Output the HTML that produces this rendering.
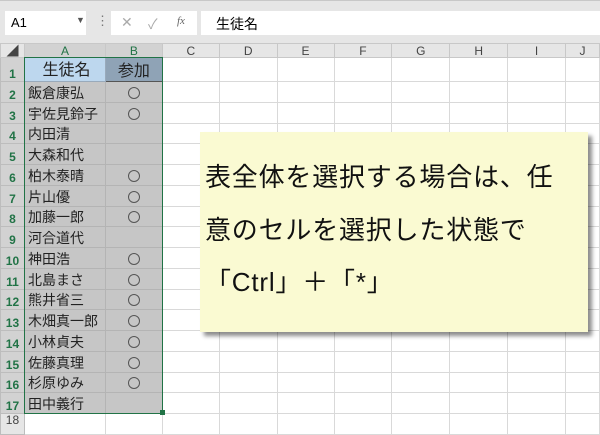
<!DOCTYPE html>
<html><head><meta charset="utf-8"><style>
*{margin:0;padding:0;box-sizing:border-box}
body{width:600px;height:425px;overflow:hidden;background:#fff;font-family:"Liberation Sans","Noto Sans CJK JP",sans-serif;position:relative}
.tb{position:absolute;left:0;top:0;width:600px;height:44px;background:#e6e6e6;border-top:1px solid #c8c8c8}
.box{position:absolute;background:#fff;top:10px;height:24px}
table{position:absolute;left:0;top:43px;border-collapse:collapse;table-layout:fixed}
td{border:1px solid #d9d9d9;font-size:14px;line-height:15px;color:#222;padding:0 0 1px 3px;white-space:nowrap;overflow:hidden;vertical-align:bottom}
tr.h td{background:#e6e6e6;color:#444;font-size:12px;line-height:12px;text-align:center;padding:0;vertical-align:middle;border-color:#c8c8c8;height:14px}
td.rn{background:#d2d2d2;color:#217346;font-size:12px;line-height:13px;text-align:center;padding:0;border-color:#bdbdbd;font-weight:bold}
td.s{background:#c6c6c6;border-color:#b4b4b4}
td.o{background:#c6c6c6;border-color:#b4b4b4;text-align:center;padding:0 0 3px 0;font-size:0;line-height:0}
td.o i{display:inline-block;width:12px;height:12px;border:1px solid #555;border-radius:50%}
.sel{position:absolute;left:24px;top:57px;width:139px;height:357px;border:1.5px solid #217346}
.call{position:absolute;left:200px;top:132px;width:388px;height:200px;background:#fafad2;box-shadow:4px 4px 4px rgba(0,0,0,.45)}
.call div{position:absolute;left:5px;font-size:26px;line-height:30px;letter-spacing:0.8px;color:#111;white-space:nowrap}
</style></head><body>
<div class="tb">
 <div class="box" style="left:5px;width:81px"><span style="position:absolute;left:6px;top:4px;font-size:13px">A1</span><span style="position:absolute;left:71px;top:4px;font-size:9px;color:#555">▼</span></div>
 <span style="position:absolute;left:96px;top:12px;font-size:13px;color:#777">⋮</span>
 <div class="box" style="left:111px;width:86px;color:#aaa;font-size:14px"><span style="position:absolute;left:10px;top:3px">✕</span><span style="position:absolute;left:37px;top:3px">✓</span><span style="position:absolute;left:66px;top:4px;font-size:11px;font-style:italic;color:#666;font-family:'Liberation Serif',serif">fx</span></div>
 <div class="box" style="left:201px;width:399px"><span style="position:absolute;left:15px;top:3px;font-size:14px">生徒名</span></div>
</div>
<table>
<colgroup><col style="width:24px"><col style="width:81px"><col style="width:57px"><col style="width:57px"><col style="width:58px"><col style="width:57px"><col style="width:58px"><col style="width:58px"><col style="width:58px"><col style="width:58px"><col style="width:34px"></colgroup>
<tr class="h"><td>◢</td><td style="background:#d2d2d2;color:#217346">A</td><td style="background:#d2d2d2;color:#217346">B</td><td>C</td><td>D</td><td>E</td><td>F</td><td>G</td><td>H</td><td>I</td><td>J</td></tr>
<tr style="height:24px"><td class="rn">1</td><td style="background:#bdd7ee;text-align:center;font-size:16px;line-height:18px;border-color:#9ab">生徒名</td><td style="background:#8fa3b6;text-align:center;font-size:16px;line-height:18px;border:1px solid #555;padding:0">参加</td><td></td><td></td><td></td><td></td><td></td><td></td><td></td><td></td></tr>
<tr style="height:21px"><td class="rn">2</td><td class="s">飯倉康弘</td><td class="o"><i></i></td><td></td><td></td><td></td><td></td><td></td><td></td><td></td><td></td></tr>
<tr style="height:21px"><td class="rn">3</td><td class="s">宇佐見鈴子</td><td class="o"><i></i></td><td></td><td></td><td></td><td></td><td></td><td></td><td></td><td></td></tr>
<tr style="height:20px"><td class="rn">4</td><td class="s">内田清</td><td class="o"></td><td></td><td></td><td></td><td></td><td></td><td></td><td></td><td></td></tr>
<tr style="height:21px"><td class="rn">5</td><td class="s">大森和代</td><td class="o"></td><td></td><td></td><td></td><td></td><td></td><td></td><td></td><td></td></tr>
<tr style="height:21px"><td class="rn">6</td><td class="s">柏木泰晴</td><td class="o"><i></i></td><td></td><td></td><td></td><td></td><td></td><td></td><td></td><td></td></tr>
<tr style="height:21px"><td class="rn">7</td><td class="s">片山優</td><td class="o"><i></i></td><td></td><td></td><td></td><td></td><td></td><td></td><td></td><td></td></tr>
<tr style="height:20px"><td class="rn">8</td><td class="s">加藤一郎</td><td class="o"><i></i></td><td></td><td></td><td></td><td></td><td></td><td></td><td></td><td></td></tr>
<tr style="height:21px"><td class="rn">9</td><td class="s">河合道代</td><td class="o"></td><td></td><td></td><td></td><td></td><td></td><td></td><td></td><td></td></tr>
<tr style="height:21px"><td class="rn">10</td><td class="s">神田浩</td><td class="o"><i></i></td><td></td><td></td><td></td><td></td><td></td><td></td><td></td><td></td></tr>
<tr style="height:21px"><td class="rn">11</td><td class="s">北島まさ</td><td class="o"><i></i></td><td></td><td></td><td></td><td></td><td></td><td></td><td></td><td></td></tr>
<tr style="height:20px"><td class="rn">12</td><td class="s">熊井省三</td><td class="o"><i></i></td><td></td><td></td><td></td><td></td><td></td><td></td><td></td><td></td></tr>
<tr style="height:21px"><td class="rn">13</td><td class="s">木畑真一郎</td><td class="o"><i></i></td><td></td><td></td><td></td><td></td><td></td><td></td><td></td><td></td></tr>
<tr style="height:21px"><td class="rn">14</td><td class="s">小林貞夫</td><td class="o"><i></i></td><td></td><td></td><td></td><td></td><td></td><td></td><td></td><td></td></tr>
<tr style="height:21px"><td class="rn">15</td><td class="s">佐藤真理</td><td class="o"><i></i></td><td></td><td></td><td></td><td></td><td></td><td></td><td></td><td></td></tr>
<tr style="height:20px"><td class="rn">16</td><td class="s">杉原ゆみ</td><td class="o"><i></i></td><td></td><td></td><td></td><td></td><td></td><td></td><td></td><td></td></tr>
<tr style="height:21px"><td class="rn">17</td><td class="s">田中義行</td><td class="o"></td><td></td><td></td><td></td><td></td><td></td><td></td><td></td><td></td></tr>
<tr style="height:21px"><td class="rn" style="background:#e6e6e6;color:#444;font-weight:normal;vertical-align:top">18</td><td></td><td></td><td></td><td></td><td></td><td></td><td></td><td></td><td></td><td></td></tr>
</table>
<div class="sel"></div>
<div style="position:absolute;left:160px;top:410px;width:5px;height:5px;background:#217346"></div>
<div class="call">
 <div style="top:30px">表全体を選択する場合は、任</div>
 <div style="top:83px">意のセルを選択した状態で</div>
 <div style="top:135px">「Ctrl」＋「*」</div>
</div>
</body></html>
